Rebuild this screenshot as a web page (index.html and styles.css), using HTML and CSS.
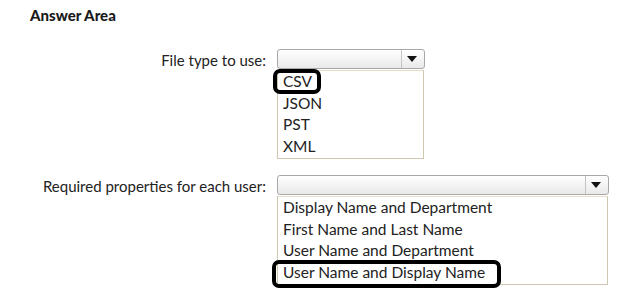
FILE: index.html
```html
<!DOCTYPE html>
<html lang="en">
<head>
    <meta charset="UTF-8">
    <meta name="viewport" content="width=device-width, initial-scale=1.0">
    <title>Answer Area</title>
    <link rel="stylesheet" href="styles.css">
</head>
<body>
    <h2 class="title">Answer Area</h2>

    <div class="question">
        <div class="label">File type to use:</div>
        <div class="field field-short">
            <div class="select">
                <span class="arrow"></span>
            </div>
            <ul class="options">
                <li><span class="answer answer-short">CSV</span></li>
                <li>JSON</li>
                <li>PST</li>
                <li>XML</li>
            </ul>
        </div>
    </div>

    <div class="question">
        <div class="label">Required properties for each user:</div>
        <div class="field field-long">
            <div class="select">
                <span class="arrow"></span>
            </div>
            <ul class="options">
                <li>Display Name and Department</li>
                <li>First Name and Last Name</li>
                <li>User Name and Department</li>
                <li><span class="answer answer-long">User Name and Display Name</span></li>
            </ul>
        </div>
    </div>
</body>
</html>
```

FILE: styles.css
```css
body {
    margin: 0;
    padding: 0;
    background: #fff;
    color: #222;
    font-family: Lato, "Open Sans", sans-serif;
}

.title {
    margin: 0;
    padding: 6px 0 0 30px;
    height: 49px;
    box-sizing: border-box;
    font-size: 15px;
    font-weight: 900;
    color: #1a1a1a;
}

.question {
    display: flex;
    align-items: flex-start;
    margin-bottom: 16px;
}

.label {
    width: 277px;
    padding-right: 11px;
    box-sizing: border-box;
    text-align: right;
    font-size: 15px;
    line-height: 19px;
    padding-top: 2px;
}

.field-short {
    width: 148px;
}

.field-long {
    width: 332px;
}

.select {
    display: flex;
    justify-content: flex-end;
    height: 20px;
    border: 1px solid #a8a8a8;
    border-radius: 3px;
    background: linear-gradient(#ffffff, #e9e9e9);
    box-sizing: border-box;
}

.arrow {
    width: 22px;
    border-left: 1px solid #c4c4c4;
    position: relative;
}

.arrow::after {
    content: "";
    position: absolute;
    left: 5px;
    top: 6px;
    border-left: 5px solid transparent;
    border-right: 5px solid transparent;
    border-top: 6px solid #111;
}

.options {
    list-style: none;
    margin: 1px 0 0 0;
    padding: 0 0 1px 5px;
    border: 1px solid #cfc6b0;
    border-top-color: #e8dfc8;
    width: calc(100% - 1px);
    box-sizing: border-box;
}

.options li {
    font-size: 15.5px;
    line-height: 21.5px;
    height: 21.5px;
}

.answer {
    position: relative;
}

.answer::after {
    content: "";
    position: absolute;
    top: -3px;
    bottom: -4px;
    border: 4px solid #000;
    border-radius: 7px;
}

.answer-short::after {
    left: -10px;
    right: -9px;
}

.answer-long::after {
    left: -11px;
    right: -16px;
    bottom: -7px;
}
```
